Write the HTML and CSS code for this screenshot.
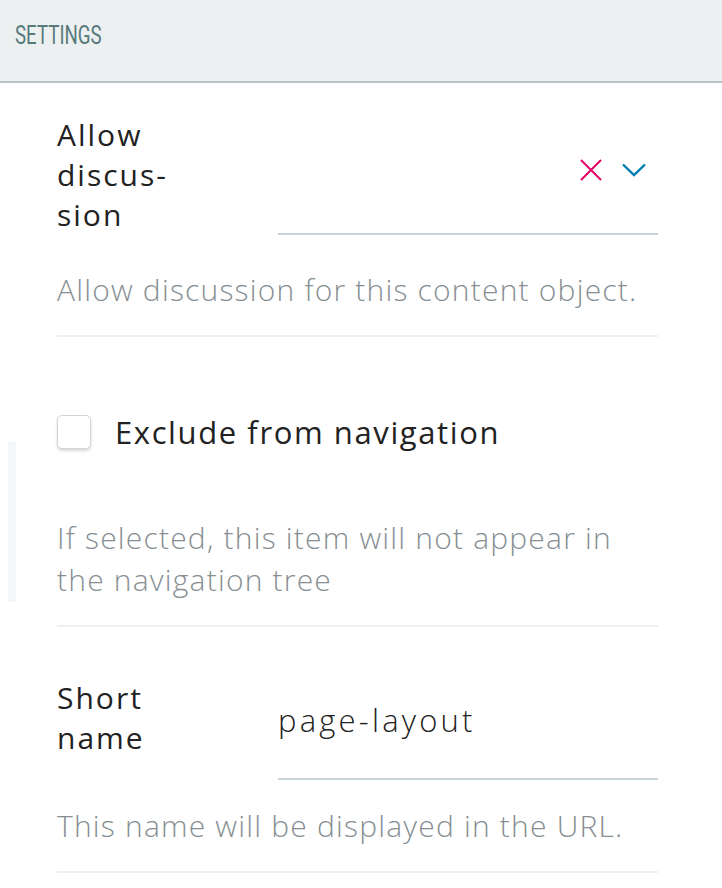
FILE: index.html
```html
<!DOCTYPE html>
<html lang="en">
<head>
  <meta charset="UTF-8" />
  <meta name="viewport" content="width=device-width, initial-scale=1.0"/>
  <title>Settings</title>
  <link rel="stylesheet" href="styles.css">
</head>
<body>

  <header class="sidebar-header">
    <h2>SETTINGS</h2>
  </header>

  <div class="form">
    <div class="scroll-hint"></div>

    <!-- Allow discussion -->
    <div class="field field-discussion">
      <div class="field-row">
        <label class="field-label">Allow discus&shy;sion</label>
        <div class="select-control">
          <span class="select-value"></span>
          <span class="select-icons">
            <svg class="icon-clear" width="22" height="22" viewBox="0 0 22 22">
              <path d="M1 1 L21 21 M21 1 L1 21" stroke="#e40166" stroke-width="2" fill="none"/>
            </svg>
            <svg class="icon-open" width="24" height="14" viewBox="0 0 24 14">
              <path d="M1 1.5 L12 12 L23 1.5" stroke="#007eb1" stroke-width="2.4" fill="none"/>
            </svg>
          </span>
        </div>
      </div>
      <p class="help">Allow discussion for this content object.</p>
    </div>

    <!-- Exclude from navigation -->
    <div class="field field-checkbox">
      <div class="checkbox-row">
        <span class="checkbox"></span>
        <label class="checkbox-label">Exclude from navigation</label>
      </div>
      <p class="help">If selected, this item will not appear in the navigation tree</p>
    </div>

    <!-- Short name -->
    <div class="field field-shortname">
      <div class="field-row">
        <label class="field-label">Short name</label>
        <div class="text-control">
          <span class="text-value">page-layout</span>
        </div>
      </div>
      <p class="help">This name will be displayed in the URL.</p>
    </div>
  </div>

</body>
</html>
```

FILE: styles.css
```css
* {
  box-sizing: border-box;
}

body {
  margin: 0;
  font-family: 'Open Sans', 'Noto Sans', sans-serif;
  background-color: #fff;
  color: #222;
}

.sidebar-header {
  height: 83px;
  background-color: #ecf0f1;
  border-bottom: 2px solid #b8c5c7;
  padding: 0 15px;
  display: flex;
  align-items: center;
}

.sidebar-header h2 {
  display: inline-block;
  margin: 0 0 12px;
  font-family: 'Roboto', sans-serif;
  font-weight: normal;
  font-size: 26px;
  color: #577a7b;
  transform: scaleX(0.72);
  transform-origin: left center;
}

.form {
  position: relative;
  padding: 0 64px 0 57px;
}

/* faint strip on the left edge */
.scroll-hint {
  position: absolute;
  left: 8px;
  top: 359px;
  width: 8px;
  height: 160px;
  background: #f3f7fa;
}

.field {
  border-bottom: 2px solid #edf1f2;
}

.field-row {
  display: grid;
  grid-template-columns: 221px 380px;
}

.field-label {
  font-size: 30px;
  font-weight: 500;
  line-height: 40px;
  letter-spacing: 2px;
  width: 135px;
  hyphens: manual;
}

.select-control {
  display: flex;
  align-items: center;
  justify-content: flex-end;
  border-bottom: 2px solid #c7d5d8;
  padding-bottom: 8px;
}

.select-icons {
  display: flex;
  align-items: center;
  gap: 20px;
  margin-right: 12px;
}

.text-control {
  display: flex;
  align-items: center;
  height: 102px;
  padding-bottom: 16px;
  border-bottom: 2px solid #c7d5d8;
}

.text-value {
  font-size: 31px;
  font-weight: 300;
  letter-spacing: 3.2px;
}

.help {
  margin: 0;
  font-size: 30px;
  font-weight: 300;
  line-height: 42px;
  letter-spacing: 1.2px;
  color: #878f93;
}

.field-discussion {
  padding: 32px 0 24px;
}

.field-discussion .help {
  margin-top: 34px;
}

.field-checkbox {
  padding: 72px 0 24px;
}

.checkbox-row {
  display: flex;
  align-items: center;
  gap: 24px;
  height: 46px;
}

.checkbox {
  width: 34px;
  height: 34px;
  border: 1px solid #d4d4d5;
  border-radius: 5px;
  box-shadow: 0 2px 3px rgba(0, 0, 0, 0.15);
  background: #fff;
}

.checkbox-label {
  font-size: 31px;
  letter-spacing: 1.6px;
}

.field-checkbox .help {
  margin-top: 62px;
}

.field-shortname {
  padding: 51px 0 24px;
}

.field-shortname .help {
  margin-top: 25px;
}
```
